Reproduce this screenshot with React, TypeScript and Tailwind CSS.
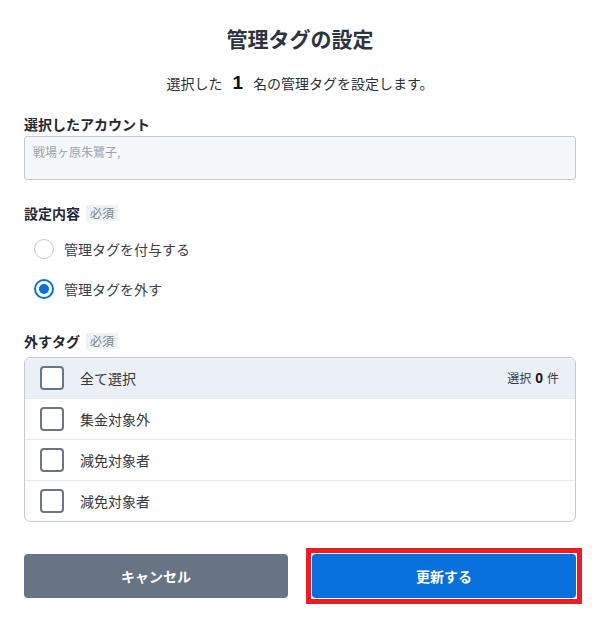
import React from 'react';

const tags = ['集金対象外', '減免対象者', '減免対象者'];

const Badge: React.FC = () => (
  <span className="ml-1.5 inline-flex h-4 items-center bg-[#eef1f5] px-1 text-[12px] leading-4 font-normal text-[#7a828d]">
    必須
  </span>
);

const Checkbox: React.FC = () => (
  <span className="block h-6 w-6 shrink-0 rounded-[4px] border-2 border-[#6b7683] bg-white" />
);

const Radio: React.FC<{ checked?: boolean }> = ({ checked }) =>
  checked ? (
    <span className="flex h-5 w-5 shrink-0 items-center justify-center rounded-full border-2 border-[#0a6fdb] bg-white">
      <span className="h-2.5 w-2.5 rounded-full bg-[#0a6fdb]" />
    </span>
  ) : (
    <span className="block h-5 w-5 shrink-0 rounded-full border border-[#c3cad4] bg-white" />
  );

export default function App() {
  return (
    <div
      className="min-h-[622px] w-[600px] bg-white px-6 pt-6 text-[#2b2f36]"
      style={{ fontFamily: '"Noto Sans CJK JP", "Noto Sans", sans-serif' }}
    >
      <h1 className="text-center text-[21px] leading-7 font-bold text-[#2d3440]">管理タグの設定</h1>

      <p className="mt-[19px] flex h-6 items-center justify-center text-sm text-[#2b2f36]">
        選択した
        <span className="mx-2.5 text-[19px] font-bold text-[#111]" style={{ fontFamily: '"Liberation Sans", sans-serif' }}>1</span>
        名の管理タグを設定します。
      </p>

      <div className="mt-[19px] text-sm leading-5 font-bold text-[#222831]">選択したアカウント</div>
      <div className="mt-0.5 h-11 rounded-[3px] border border-[#c2cad4] bg-[#f5f8fb] px-2 pt-[7px] text-xs leading-4 text-[#9aa3ad]">
        戦場ヶ原朱鷺子,
      </div>

      <div className="mt-[23px] flex items-center text-sm leading-5 font-bold text-[#222831]">
        設定内容
        <Badge />
      </div>
      <div className="mt-1.5 pl-2.5">
        <label className="flex h-10 items-center gap-2.5 text-sm text-[#3a3f47]">
          <Radio />
          管理タグを付与する
        </label>
        <label className="flex h-10 items-center gap-2.5 text-sm text-[#3a3f47]">
          <Radio checked />
          管理タグを外す
        </label>
      </div>

      <div className="mt-[22px] flex items-center text-sm leading-5 font-bold text-[#222831]">
        外すタグ
        <Badge />
      </div>
      <div className="mt-[6px] overflow-hidden rounded-md border border-[#c3cad3]">
        <div className="flex h-10 items-center bg-[#ebf0f7] pr-4 pl-[15px]">
          <Checkbox />
          <span className="ml-4 flex-1 text-sm text-[#333840]">全て選択</span>
          <span className="flex items-center text-xs text-[#333840]">
            選択
            <span className="mx-1 text-sm font-bold text-[#111]" style={{ fontFamily: '"Liberation Sans", sans-serif' }}>0</span>
            件
          </span>
        </div>
        {tags.map((tag, idx) => (
          <div key={idx} className="flex h-[41px] items-center border-t border-[#e6eaef] pl-[15px]">
            <Checkbox />
            <span className="ml-4 text-sm text-[#333840]">{tag}</span>
          </div>
        ))}
      </div>

      <div className="mt-8 grid grid-cols-2 gap-6">
        <button className="h-11 rounded-[4px] bg-[#687483] text-sm font-bold text-white">キャンセル</button>
        <div className="relative">
          <button className="h-11 w-full rounded-[4px] bg-[#0870dc] text-sm font-bold text-white">更新する</button>
          <span className="pointer-events-none absolute -inset-[6px] border-[5px] border-[#ec1c24]" />
        </div>
      </div>
    </div>
  );
}
